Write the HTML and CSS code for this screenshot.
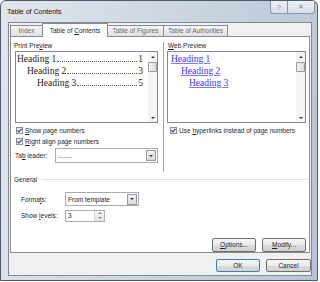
FILE: index.html
```html
<!DOCTYPE html>
<html lang="en">
  <head>
    <meta charset="UTF-8" />
    <title>Table of Contents</title>
    <link rel="stylesheet" href="styles.css">
  </head>
  <body>
    <div class="window">
      <div class="titlebar">
        <span class="title">Table of Contents</span>
        <div class="caption">
          <div class="cap-btn help">?</div>
          <div class="cap-btn close">✕</div>
        </div>
      </div>
      <div class="client">
        <div class="tabs">
          <div class="tab tab-index">Index</div>
          <div class="tab tab-toc active">Table of <u>C</u>ontents</div>
          <div class="tab tab-fig">Table of Figures</div>
          <div class="tab tab-auth">Table of Authorities</div>
        </div>
        <div class="panel">
          <div class="previews">
            <div class="col col-print">
              <div class="label">Print Pre<u>v</u>iew</div>
              <div class="preview">
                <div class="preview-body">
                  <div class="toc-row"><span>Heading 1</span><span class="dots"></span><span>1</span></div>
                  <div class="toc-row lvl2"><span>Heading 2</span><span class="dots"></span><span>3</span></div>
                  <div class="toc-row lvl3"><span>Heading 3</span><span class="dots"></span><span>5</span></div>
                </div>
                <div class="scrollbar">
                  <div class="sb-arrow"><i class="tri-up"></i></div>
                  <div class="sb-thumb"></div>
                  <div class="sb-track"></div>
                  <div class="sb-arrow"><i class="tri-down"></i></div>
                </div>
              </div>
              <div class="check">
                <span class="box"><svg width="5" height="5" viewBox="0 0 5 5"><path d="M0.5 2.5 L2 4 L4.5 0.8" fill="none" stroke="#27408b" stroke-width="1.1"/></svg></span>
                <span><u>S</u>how page numbers</span>
              </div>
              <div class="check">
                <span class="box"><svg width="5" height="5" viewBox="0 0 5 5"><path d="M0.5 2.5 L2 4 L4.5 0.8" fill="none" stroke="#27408b" stroke-width="1.1"/></svg></span>
                <span><u>R</u>ight align page numbers</span>
              </div>
              <div class="leader-row">
                <span class="leader-label">Ta<u>b</u> leader:</span>
                <div class="select leader"><span class="select-text">........</span><span class="drop"><i class="tri-down"></i></span></div>
              </div>
            </div>
            <div class="vsep"></div>
            <div class="col col-web">
              <div class="label"><u>W</u>eb Preview</div>
              <div class="preview web">
                <div class="preview-body">
                  <div class="web-row"><span>Heading 1</span></div>
                  <div class="web-row lvl2"><span>Heading 2</span></div>
                  <div class="web-row lvl3"><span>Heading 3</span></div>
                </div>
                <div class="scrollbar">
                  <div class="sb-arrow"><i class="tri-up"></i></div>
                  <div class="sb-thumb"></div>
                  <div class="sb-track"></div>
                  <div class="sb-arrow"><i class="tri-down"></i></div>
                </div>
              </div>
              <div class="check web-check">
                <span class="box"><svg width="5" height="5" viewBox="0 0 5 5"><path d="M0.5 2.5 L2 4 L4.5 0.8" fill="none" stroke="#27408b" stroke-width="1.1"/></svg></span>
                <span>Use <u>h</u>yperlinks instead of page numbers</span>
              </div>
            </div>
          </div>
          <div class="group"><span>General</span><span class="group-line"></span></div>
          <div class="field formats-row">
            <span class="field-label">Forma<u>t</u>s:</span>
            <div class="select formats"><span class="select-text">From template</span><span class="drop"><i class="tri-down"></i></span></div>
          </div>
          <div class="field levels-row">
            <span class="field-label">Show <u>l</u>evels:</span>
            <div class="spinner">
              <span class="spin-val">3</span>
              <span class="spin-btns"><span><i class="tri-up"></i></span><span><i class="tri-down"></i></span></span>
            </div>
          </div>
          <div class="panel-buttons">
            <div class="btn"><u>O</u>ptions...</div>
            <div class="btn"><u>M</u>odify...</div>
          </div>
        </div>
        <div class="footer">
          <div class="btn default">OK</div>
          <div class="btn cancel">Cancel</div>
        </div>
      </div>
    </div>
  </body>
</html>
```

FILE: styles.css
```css
body {
  margin: 0;
  background-color: #fff;
  font-family: "Liberation Sans", Arial, sans-serif;
  font-size: 6.5px;
  color: #1e1e1e;
}
u {
  text-decoration-thickness: 0.5px;
  text-underline-offset: 1px;
}
.window {
  width: 318px;
  height: 281px;
  box-sizing: border-box;
  border: 1px solid #4f5b6a;
  border-radius: 6px 6px 0 0;
  background: linear-gradient(100deg, #e2e6eb 0%, #d2dae4 35%, #c3cfdc 70%, #b6c5d5 100%);
  display: flex;
  flex-direction: column;
}
.titlebar {
  height: 21px;
  display: flex;
  justify-content: space-between;
  align-items: flex-start;
}
.title {
  margin: 6px 0 0 6px;
  font-size: 7px;
  line-height: 9px;
  color: #111;
}
.caption {
  display: flex;
  margin-right: 2px;
}
.cap-btn {
  height: 13px;
  box-sizing: border-box;
  border: 1px solid #8a96a6;
  border-top: none;
  background: linear-gradient(#eef1f5, #d6dde6);
  display: flex;
  align-items: center;
  justify-content: center;
  color: #7d8896;
  font-size: 7px;
}
.help {
  width: 17px;
  border-right: none;
  border-radius: 0 0 0 3px;
}
.close {
  width: 28px;
  border-radius: 0 0 3px 0;
}
.client {
  margin-left: 7px;
  width: 304px;
  height: 254px;
  box-sizing: border-box;
  border: 1px solid #7d8a99;
  background-color: #f0f0f0;
  display: flex;
  flex-direction: column;
}
.tabs {
  display: flex;
  height: 13px;
  align-items: flex-end;
  margin-left: 1px;
  position: relative;
  z-index: 1;
}
.tab {
  height: 11px;
  box-sizing: border-box;
  border: 1px solid #898c95;
  border-bottom: none;
  background: linear-gradient(#f4f4f4, #e1e1e1);
  color: #6b6b6b;
  line-height: 10px;
  text-align: center;
  margin-right: -1px;
}
.tab.active {
  height: 14px;
  background: #fff;
  color: #1e1e1e;
  line-height: 13px;
  margin-bottom: -1px;
}
.tab-index { width: 33px; }
.tab-toc { width: 66px; }
.tab-fig { width: 57px; }
.tab-auth { width: 65px; }
.panel {
  margin-left: 1px;
  width: 300px;
  height: 217px;
  box-sizing: border-box;
  border: 1px solid #898c95;
  background-color: #fff;
  display: flex;
  flex-direction: column;
}
.previews {
  display: flex;
  height: 139px;
}
.col-print {
  width: 150px;
  box-sizing: border-box;
  padding: 4px 0 0 3px;
}
.col-web {
  flex: 1;
  padding: 4px 3px 0 0;
}
.label {
  height: 9px;
  line-height: 9px;
}
.col-web .label {
  margin-left: 2px;
}
.vsep {
  width: 1px;
  background-color: #a3a3a3;
  margin: 5px 2px 0 2px;
}
.preview {
  margin: 1px 0 0 1px;
  width: 143px;
  height: 72px;
  box-sizing: border-box;
  border: 1px solid #828790;
  display: flex;
}
.preview.web {
  width: 139px;
}
.preview-body {
  flex: 1;
  padding: 1px 0 0 1px;
  font-family: "Liberation Serif", "Times New Roman", serif;
  font-size: 9.5px;
  line-height: 12px;
  color: #222;
}
.toc-row {
  display: flex;
  align-items: baseline;
  padding-right: 5px;
}
.toc-row.lvl2 { padding-left: 10px; }
.toc-row.lvl3 { padding-left: 20px; }
.dots {
  flex: 1;
  border-bottom: 1px dotted #555;
  margin: 0 1px;
}
.web .preview-body {
  padding-left: 3px;
}
.web-row span {
  color: #3434ff;
  text-decoration: underline;
  text-decoration-color: #7a7aff;
  text-decoration-thickness: 1px;
}
.web-row.lvl2 { padding-left: 10px; }
.web-row.lvl3 { padding-left: 18px; }
.scrollbar {
  width: 9px;
  background-color: #f4f4f4;
  display: flex;
  flex-direction: column;
}
.sb-arrow {
  height: 9px;
  display: flex;
  align-items: center;
  justify-content: center;
}
.sb-thumb {
  height: 10px;
  margin: 1px 0 0 0;
  box-sizing: border-box;
  border: 1px solid #9b9b9b;
  border-radius: 1px;
  background: linear-gradient(90deg, #f3f3f3, #dcdcdc);
}
.sb-track {
  flex: 1;
}
.tri-up,
.tri-down {
  display: block;
  width: 0;
  height: 0;
  border-left: 2px solid transparent;
  border-right: 2px solid transparent;
}
.tri-up {
  border-bottom: 2px solid #333;
}
.tri-down {
  border-top: 2px solid #333;
}
.check {
  display: flex;
  align-items: center;
  height: 10px;
  margin: 2px 0 0 2px;
}
.check + .check {
  margin-top: 1px;
}
.web-check {
  margin-left: 4px;
}
.box {
  width: 7px;
  height: 7px;
  box-sizing: border-box;
  border: 1px solid #8e8f8f;
  background: linear-gradient(135deg, #dfe5ee, #f8f9fb);
  display: flex;
  align-items: center;
  justify-content: center;
  margin-right: 2px;
}
.leader-row {
  display: flex;
  align-items: center;
  margin-top: 2px;
  height: 15px;
}
.leader-label {
  width: 40px;
  margin-left: 1px;
}
.select {
  height: 100%;
  box-sizing: border-box;
  border: 1px solid #a5acb5;
  background-color: #fff;
  display: flex;
  align-items: center;
}
.select-text {
  flex: 1;
  padding-left: 2px;
}
.leader {
  width: 103px;
}
.drop {
  width: 10px;
  height: 11px;
  margin-right: 1px;
  box-sizing: border-box;
  border: 1px solid #9a9a9a;
  background: linear-gradient(#f2f2f2, #d9d9d9);
  display: flex;
  align-items: center;
  justify-content: center;
}
.group {
  display: flex;
  align-items: center;
  height: 9px;
  margin-top: 3px;
  padding-left: 3px;
}
.group-line {
  flex: 1;
  height: 1px;
  background-color: #dde3e8;
  margin: 0 1px 0 5px;
}
.field {
  display: flex;
  align-items: center;
}
.field-label {
  width: 44px;
  padding-left: 10px;
}
.formats-row {
  height: 14px;
  margin-top: 9px;
}
.formats {
  width: 74px;
}
.levels-row {
  height: 12px;
  margin-top: 4px;
}
.spinner {
  width: 40px;
  height: 100%;
  box-sizing: border-box;
  border: 1px solid #abadb3;
  display: flex;
}
.spin-val {
  flex: 1;
  padding-left: 2px;
  line-height: 10px;
}
.spin-btns {
  width: 9px;
  display: flex;
  flex-direction: column;
  background: linear-gradient(#f4f4f4, #e2e2e2);
  border-left: 1px solid #d5d5d5;
}
.spin-btns span {
  flex: 1;
  display: flex;
  align-items: center;
  justify-content: center;
}
.spin-btns .tri-up { border-bottom-color: #8a8a8a; }
.spin-btns .tri-down { border-top-color: #8a8a8a; }
.panel-buttons {
  display: flex;
  justify-content: flex-end;
  gap: 6px;
  margin-top: 16px;
  padding-right: 3px;
}
.btn {
  width: 44px;
  height: 14px;
  box-sizing: border-box;
  border: 1px solid #707070;
  border-radius: 2px;
  background: linear-gradient(#f4f4f4 0%, #ebebeb 50%, #dddddd 51%, #d0d0d0 100%);
  display: flex;
  align-items: center;
  justify-content: center;
}
.footer {
  display: flex;
  justify-content: flex-end;
  gap: 6px;
  padding: 6px 0 0 0;
}
.footer .btn {
  height: 13px;
}
.btn.default {
  border-color: #3c7fb1;
}
.btn.cancel {
  width: 45px;
}
```
